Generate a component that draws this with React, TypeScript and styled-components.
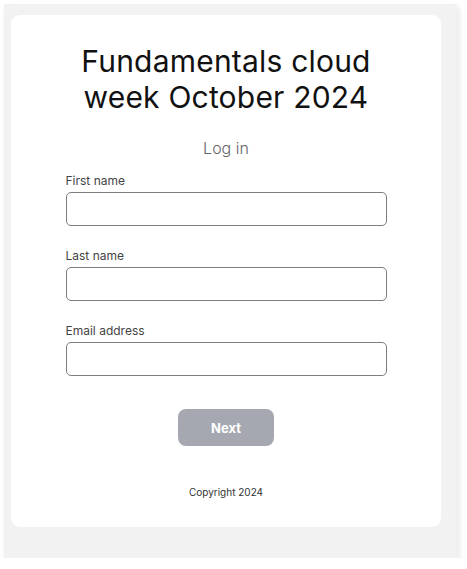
import React from "react";
import styled, { createGlobalStyle } from "styled-components";

const GlobalStyle = createGlobalStyle`
  html, body {
    margin: 0;
    padding: 0;
    background: #ffffff;
  }
  body {
    font-family: Inter, "Noto Sans", "Liberation Sans", sans-serif;
  }
`;

const fields = [
  { id: "first", label: "First name", type: "text" },
  { id: "last", label: "Last name", type: "text" },
  { id: "email", label: "Email address", type: "email" },
];

const App: React.FC = () => {
  return (
    <>
      <GlobalStyle />
      <Frame>
        <Card>
          <Title>
            Fundamentals cloud
            <br />
            week October 2024
          </Title>
          <Subtitle>Log in</Subtitle>
          <Form onSubmit={(e) => e.preventDefault()}>
            {fields.map((field) => (
              <Field key={field.id}>
                <Label htmlFor={field.id}>{field.label}</Label>
                <Input id={field.id} type={field.type} />
              </Field>
            ))}
            <ButtonRow>
              <NextButton type="submit" disabled>
                Next
              </NextButton>
            </ButtonRow>
          </Form>
          <Footer>Copyright 2024</Footer>
        </Card>
      </Frame>
    </>
  );
};

const Frame = styled.div`
  box-sizing: border-box;
  margin: 4px 0 0 4px;
  width: 453px;
  height: 554px;
  padding: 11px 0 0 7px;
  background: #f2f2f2;
  box-shadow: 2px 3px 6px rgba(0, 0, 0, 0.1);
`;

const Card = styled.div`
  box-sizing: border-box;
  width: 430px;
  height: 512px;
  padding-top: 28px;
  background: #ffffff;
  border-radius: 9px;
  display: flex;
  flex-direction: column;
  align-items: center;
`;

const Title = styled.h1`
  margin: 0;
  font-size: 30px;
  line-height: 36px;
  font-weight: 400;
  color: #111111;
  text-align: center;
  letter-spacing: 0.2px;
`;

const Subtitle = styled.div`
  margin-top: 23px;
  font-size: 16px;
  line-height: 20px;
  font-weight: 300;
  color: #666666;
`;

const Form = styled.form`
  width: 321px;
  margin-top: 15px;
  display: flex;
  flex-direction: column;
  gap: 22px;
`;

const Field = styled.div`
  display: flex;
  flex-direction: column;
  gap: 4px;
`;

const Label = styled.label`
  font-size: 12px;
  line-height: 15px;
  color: #444444;
`;

const Input = styled.input`
  box-sizing: border-box;
  height: 34px;
  width: 100%;
  border: 1px solid #7d7d7d;
  border-radius: 5px;
  background: #ffffff;
  font: inherit;
  padding: 0 10px;
`;

const ButtonRow = styled.div`
  display: flex;
  justify-content: center;
  margin-top: 11px;
`;

const NextButton = styled.button`
  width: 96px;
  height: 37px;
  border: none;
  border-radius: 8px;
  background: #a6a8b1;
  color: #ffffff;
  font-family: inherit;
  font-size: 13px;
  font-weight: 700;
`;

const Footer = styled.div`
  margin-top: 40px;
  font-size: 10px;
  line-height: 13px;
  color: #333333;
`;

export default App;
